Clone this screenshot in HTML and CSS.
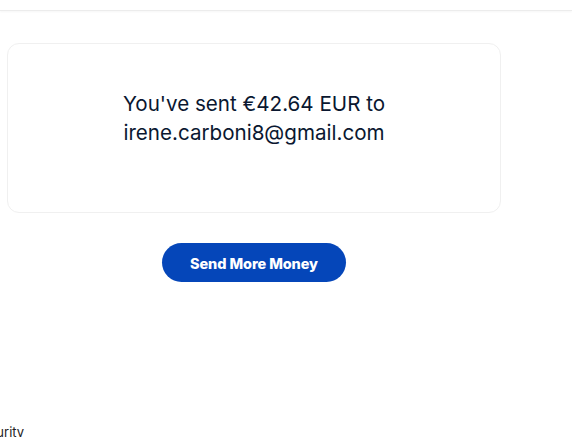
FILE: index.html
```html
<!DOCTYPE html>
<html lang="en">
<head>
<meta charset="utf-8">
<title>Payment sent</title>
<link rel="stylesheet" href="styles.css">
</head>
<body>
<header class="topbar"></header>
<main class="main">
  <section class="card">
    <p class="msg">You've sent €42.64 EUR to<br>irene.carboni8@gmail.com</p>
  </section>
  <div class="actions">
    <button class="btn" type="button">Send More Money</button>
  </div>
</main>
<footer class="footer">
  <span class="foot-text">Security</span>
</footer>
</body>
</html>
```
FILE: styles.css
```css
html, body {
  margin: 0;
  padding: 0;
  background: #ffffff;
}
body {
  width: 572px;
  height: 437px;
  overflow: hidden;
  font-family: Inter, "Liberation Sans", Arial, sans-serif;
  color: #0b1a33;
}
.topbar {
  height: 10px;
  border-bottom: 1px solid #ececec;
  box-shadow: 0 1px 2px rgba(0,0,0,0.04);
}
.main {
  display: flex;
  flex-direction: column;
  width: 494px;
  margin-left: 7px;
  padding-top: 32px;
}
.card {
  height: 168px;
  border: 1px solid #f0f0f0;
  border-radius: 12px;
  display: flex;
  justify-content: center;
  box-sizing: content-box;
}
.msg {
  margin: 45px 0 0;
  font-size: 20.6px;
  line-height: 29px;
  text-align: center;
  color: #0a1730;
  font-weight: 400;
}
.actions {
  display: flex;
  justify-content: center;
  padding-top: 30px;
}
.btn {
  width: 184px;
  height: 39px;
  border: 0;
  border-radius: 20px;
  background: #0546b9;
  color: #ffffff;
  font-family: Inter, "Liberation Sans", Arial, sans-serif;
  font-weight: 800;
  font-size: 14.5px;
  letter-spacing: -0.1px;
  padding: 1px 0 0;
}
.footer {
  padding-top: 139px;
}
.foot-text {
  display: inline-block;
  margin-left: -27px;
  font-size: 13px;
  color: #222;
}
```
